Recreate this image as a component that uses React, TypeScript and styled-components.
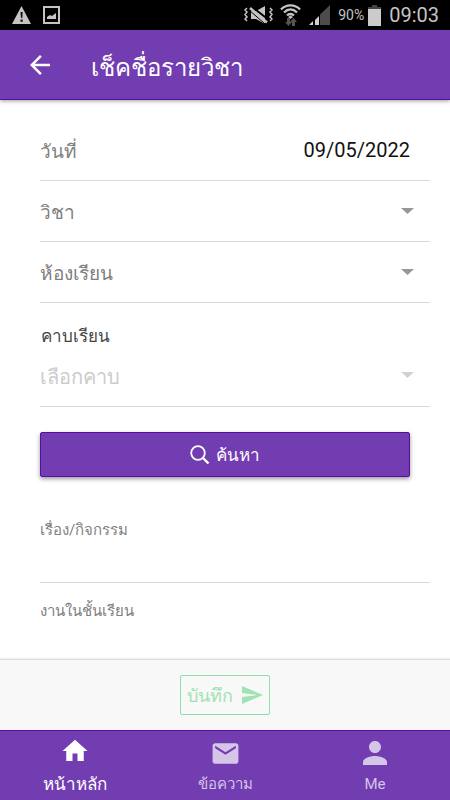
import React, { useState } from "react";
import styled, { createGlobalStyle } from "styled-components";
import { MdArrowBack, MdHome, MdEmail, MdPerson, MdSend } from "react-icons/md";

const purple = "#723db1";
const purpleEdge = "#5b0aa3";

const GlobalStyle = createGlobalStyle`
  *, *::before, *::after { box-sizing: border-box; }
  body { margin: 0; background: #fff; }
  body, button, input, select, textarea {
    font-family: Roboto, "Noto Sans", sans-serif;
  }
`;

const Screen = styled.div`
  display: flex;
  flex-direction: column;
  height: 100vh;
`;

const StatusBar = styled.div`
  display: flex;
  align-items: center;
  justify-content: space-between;
  flex: none;
  height: 30px;
  padding: 0 11px 0 12px;
  background: #000;
  color: #c4c4c4;
`;

const StatusGroup = styled.div<{ $gap: number }>`
  display: flex;
  align-items: center;
  gap: ${(p) => p.$gap}px;
`;

const Battery = styled.span`
  font-size: 14px;
  line-height: 30px;
`;

const Clock = styled.span`
  font-size: 20px;
  line-height: 30px;
`;

const Header = styled.header`
  display: flex;
  align-items: center;
  flex: none;
  height: 70px;
  padding: 0 25px;
  gap: 36px;
  background: ${purple};
  border-bottom: 1px solid ${purpleEdge};
  box-shadow: 0 1px 4px rgba(0, 0, 0, 0.4);
  color: #fff;
  z-index: 1;
`;

const IconButton = styled.button`
  display: flex;
  padding: 0;
  border: 0;
  background: none;
  color: inherit;
`;

const Title = styled.h1`
  margin: 0;
  padding-top: 6px;
  font-size: 24px;
  line-height: 36px;
  font-weight: 400;
`;

const Content = styled.main`
  flex: 1;
  min-height: 0;
  padding: 20px 20px 0 40px;
  overflow-y: auto;
  scrollbar-width: none;
`;

const Row = styled.div`
  display: flex;
  align-items: center;
  height: 61px;
  border-bottom: 1px solid #d9d9d9;
`;

const RowLabel = styled.label`
  flex: none;
  padding-top: 3px;
  color: #808080;
  font-size: 19px;
  line-height: 30px;
`;

const DateInput = styled.input`
  flex: 1;
  min-width: 0;
  padding: 0 20px 0 0;
  border: 0;
  outline: 0;
  background: none;
  color: #111;
  font-size: 20px;
  line-height: 30px;
  text-align: right;
`;

const SelectBox = styled.div`
  display: flex;
  flex: 1;
  align-items: center;
  min-width: 0;
  padding-right: 16px;
`;

const Select = styled.select`
  flex: 1;
  min-width: 0;
  height: 36px;
  padding: 4px 0 0;
  border: 0;
  outline: 0;
  appearance: none;
  background: none;
  color: #111;
  font-size: 20px;
  line-height: 32px;

  &:disabled {
    color: #ccc;
    opacity: 1;
  }
`;

const Arrow = styled.svg<{ $muted?: boolean }>`
  flex: none;
  color: ${(p) => (p.$muted ? "#d2d2d2" : "#979797")};
`;

const Stack = styled.div<{ $height: number }>`
  display: flex;
  flex-direction: column;
  height: ${(p) => p.$height}px;
  border-bottom: 1px solid #d9d9d9;
`;

const PeriodLabel = styled.label`
  padding: 20px 1px 0;
  color: #444;
  font-size: 17px;
  line-height: 26px;
`;

const StackSelect = styled.div`
  display: flex;
  padding-top: 8px;
`;

const SmallLabel = styled.label`
  padding-top: 16px;
  color: #808080;
  font-size: 15px;
  line-height: 24px;
`;

const TextInput = styled.input`
  height: 44px;
  padding: 0;
  border: 0;
  outline: 0;
  background: none;
  font-size: 17px;
`;

const SearchArea = styled.div`
  padding: 25px 20px 25px 0;
`;

const SearchButton = styled.button`
  display: flex;
  align-items: center;
  justify-content: center;
  gap: 6px;
  width: 100%;
  height: 45px;
  padding: 0;
  border: 1px solid ${purpleEdge};
  border-radius: 2px;
  background: ${purple};
  box-shadow: 0 2px 4px rgba(0, 0, 0, 0.4);
  color: #fff;
  font-size: 17px;
`;

const Footer = styled.footer`
  display: flex;
  align-items: center;
  justify-content: center;
  flex: none;
  height: 71px;
  background: #f8f8f8;
  border-top: 1px solid #dedede;
  box-shadow: 0 -1px 1px #f0f0f0;
`;

const SaveButton = styled.button`
  display: flex;
  align-items: center;
  justify-content: center;
  gap: 7px;
  height: 40px;
  padding: 0 5px 0 6px;
  border: 1px solid #91dfa8;
  border-radius: 2px;
  background: none;
  color: #9fe3b3;
  font-size: 18px;
`;

const TabBar = styled.nav`
  display: grid;
  grid-template-columns: repeat(3, 1fr);
  flex: none;
  height: 70px;
  background: ${purple};
  border-top: 1px solid ${purpleEdge};
`;

const Tab = styled.a<{ $active?: boolean }>`
  display: flex;
  flex-direction: column;
  align-items: center;
  padding-top: 4px;
  color: ${(p) => (p.$active ? "#fff" : "#d5c5e8")};
  font-size: ${(p) => (p.$active ? 17 : 15)}px;
  line-height: 26px;
  text-decoration: none;
`;

const TabIcon = styled.span<{ $active?: boolean }>`
  display: flex;
  align-items: center;
  justify-content: center;
  height: 36px;
  padding-bottom: ${(p) => (p.$active ? 4 : 0)}px;
`;

const WarningIcon = () => (
  <svg width="19" height="18" viewBox="0 0 19 18" aria-hidden="true">
    <path d="M9.500 0 19 18H0Z" fill="#c4c4c4" />
    <path d="M8.500 6h2.200l-.4 6H9ZM8.500 13.500h2.200v2.300H8.500Z" fill="#111" />
  </svg>
);

const PictureIcon = () => (
  <svg width="18" height="18" viewBox="0 0 18 18" aria-hidden="true">
    <path d="M1 1h15v16H1Z" fill="none" stroke="#c4c4c4" strokeWidth="2" />
    <path d="M4 13v-2l3-2 2 1 4-3v6Z" fill="#c4c4c4" />
  </svg>
);

const MutedIcon = () => (
  <svg width="29" height="20" viewBox="0 0 29 20" fill="none" stroke="#c4c4c4" aria-hidden="true">
    <path d="M7 6h5l9-5v18l-9-5H7Z" fill="#c4c4c4" stroke="none" />
    <path d="M6 .5 25 15" stroke="#000" strokeWidth="2" />
    <path d="M6 3 23 17.500" strokeWidth="2.500" />
    <path d="M4.500 4.500 21 19" stroke="#000" strokeWidth="1" />
    <path d="m3 3-2 2 2 2-2 2.500 2 2.500-2 2 2 2M26 3l2 2-2 2 2 2.500-2 2.500 2 2-2 2" strokeWidth="1.500" />
  </svg>
);

const WifiIcon = () => (
  <svg width="21" height="22" viewBox="0 0 21 22" fill="none" aria-hidden="true">
    <path d="M1 5.500c5-5.500 14-5.500 19 0M4 8.500c4-4 9-4 13 0M7 11.500c2-2 5-2 7 0" stroke="#c4c4c4" strokeWidth="2.300" />
    <path d="M10.500 11.500 13 13l-2.500 2L8 13Z" fill="#c4c4c4" />
    <path d="M7 14h3v4h2l-3.500 4L5 18h2ZM12 22v-4h-2l3.500-4 3.500 4h-2v4Z" fill="#555" />
  </svg>
);

const SignalIcon = () => (
  <svg width="21" height="21" viewBox="0 0 21 21" aria-hidden="true">
    <path d="M11 9.500 21 0v20H11Z" fill="#4c4c4c" />
    <path d="M0 20l4-4v4ZM6 15l4-4v9H6Z" fill="#d0d0d0" />
  </svg>
);

const BatteryIcon = () => (
  <svg width="13" height="21" viewBox="0 0 13 21" aria-hidden="true">
    <path d="M4 0h5v2h4v2H0V2h4Z" fill="#444" />
    <path d="M0 4h13v17H0Z" fill="#cbcbcb" />
  </svg>
);

const SearchIcon = () => (
  <svg width="20" height="20" viewBox="0 0 20 20" fill="none" stroke="currentColor" aria-hidden="true">
    <circle cx="8" cy="8" r="6.800" strokeWidth="1.800" />
    <path d="m13 13 5.500 5.500" strokeWidth="2.400" />
  </svg>
);

const DropArrow = ({ muted }: { muted?: boolean }) => (
  <Arrow $muted={muted} width="13" height="6" viewBox="0 0 13 6" aria-hidden="true">
    <path d="M0 0h13L6.500 6Z" fill="currentColor" />
  </Arrow>
);

const SelectRow = ({ id, label }: { id: string; label: string }) => (
  <Row>
    <RowLabel htmlFor={id}>{label}</RowLabel>
    <SelectBox>
      <Select id={id} defaultValue="">
        <option value="" />
      </Select>
      <DropArrow />
    </SelectBox>
  </Row>
);

export default function App() {
  const [date, setDate] = useState("09/05/2022");

  return (
    <>
      <GlobalStyle />
      <Screen>
        <StatusBar>
          <StatusGroup $gap={12}>
            <WarningIcon />
            <PictureIcon />
          </StatusGroup>
          <StatusGroup $gap={8}>
            <StatusGroup $gap={7}>
              <MutedIcon />
              <WifiIcon />
            </StatusGroup>
            <SignalIcon />
            <StatusGroup $gap={4}>
              <Battery>90%</Battery>
              <BatteryIcon />
            </StatusGroup>
            <Clock>09:03</Clock>
          </StatusGroup>
        </StatusBar>
        <Header>
          <IconButton type="button" aria-label="Back">
            <MdArrowBack size={30} />
          </IconButton>
          <Title>เช็คชื่อรายวิชา</Title>
        </Header>
        <Content>
          <Row>
            <RowLabel htmlFor="date">วันที่</RowLabel>
            <DateInput id="date" value={date} onChange={(e) => setDate(e.target.value)} />
          </Row>
          <SelectRow id="subject" label="วิชา" />
          <SelectRow id="room" label="ห้องเรียน" />
          <Stack $height={104}>
            <PeriodLabel htmlFor="period">คาบเรียน</PeriodLabel>
            <StackSelect>
              <SelectBox>
                <Select id="period" disabled defaultValue="">
                  <option value="">เลือกคาบ</option>
                </Select>
                <DropArrow muted />
              </SelectBox>
            </StackSelect>
          </Stack>
          <SearchArea>
            <SearchButton type="button">
              <SearchIcon />
              ค้นหา
            </SearchButton>
          </SearchArea>
          <Stack $height={81}>
            <SmallLabel htmlFor="topic">เรื่อง/กิจกรรม</SmallLabel>
            <TextInput id="topic" />
          </Stack>
          <Stack $height={81}>
            <SmallLabel htmlFor="classwork">งานในชั้นเรียน</SmallLabel>
            <TextInput id="classwork" />
          </Stack>
        </Content>
        <Footer>
          <SaveButton type="button" disabled>
            บันทึก
            <MdSend size={24} />
          </SaveButton>
        </Footer>
        <TabBar>
          <Tab href="#home" $active aria-current="page">
            <TabIcon $active>
              <MdHome size={30} />
            </TabIcon>
            หน้าหลัก
          </Tab>
          <Tab href="#messages">
            <TabIcon>
              <MdEmail size={31} />
            </TabIcon>
            ข้อความ
          </Tab>
          <Tab href="#me">
            <TabIcon>
              <MdPerson size={36} />
            </TabIcon>
            Me
          </Tab>
        </TabBar>
      </Screen>
    </>
  );
}
